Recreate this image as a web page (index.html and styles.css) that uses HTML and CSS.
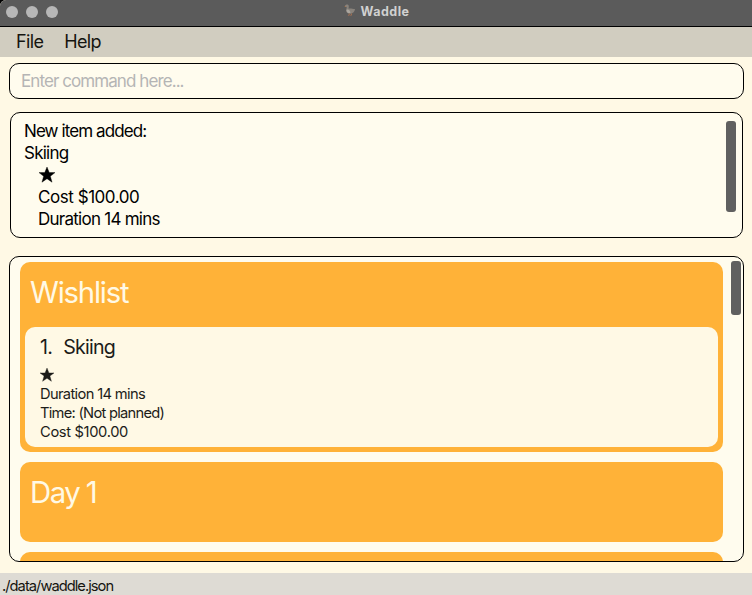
FILE: index.html
```html
<!DOCTYPE html>
<html lang="en">
<head>
<meta charset="utf-8">
<title>Waddle</title>
<link rel="stylesheet" href="styles.css">
</head>
<body>
<div class="window">
  <header class="titlebar">
    <div class="lights"><i></i><i></i><i></i></div>
    <div class="title">
      <svg class="goose" viewBox="0 0 12 12"><path d="M1 2.1C1.3.2 4.5 0 4.8 2L4.6 4.7C6.3 4 8.7 5 11 5.1 10.8 7.8 9.1 9.8 6.4 9.8 3.4 9.8 1.8 7.9 2.3 5.8L2.7 3.3Z" fill="#89837c"/><path d="M2.5 5.7C4.5 5 6.4 6.5 6.4 9 4 9.6 2.2 7.9 2.5 5.7Z" fill="#aaa69f"/><path d="M.3 2.8 1.6 1.7 2.2 2.9Z" fill="#b27d54"/><path d="M5.3 9.5V11.2H3.9M7.5 9.5V11.2H6.2" fill="none" stroke="#a67252" stroke-width=".9"/></svg>
      <span>Waddle</span>
    </div>
  </header>
  <nav class="menubar"><span>File</span><span>Help</span></nav>
  <main class="content">
    <div class="command"><span>Enter command here...</span></div>
    <section class="result">
      <div class="message">
        <p class="lead">New item added:</p>
        <p class="name">Skiing</p>
        <div class="details">
          <svg class="star" viewBox="0 0 20 20"><path d="M10 0l2.8 7h7.2l-5.8 4.6 2.1 7.4L10 14.6 3.7 19l2.1-7.4L0 7h7.2z"/></svg>
          <p class="cost">Cost $100.00</p>
          <p class="duration">Duration 14 mins</p>
        </div>
      </div>
      <div class="thumb"></div>
    </section>
    <section class="list">
      <div class="groups">
        <article class="group wishlist">
          <h2>Wishlist</h2>
          <div class="item">
            <h3><span>1.</span><span>Skiing</span></h3>
            <svg class="star" viewBox="0 0 20 20"><path d="M10 0l2.8 7h7.2l-5.8 4.6 2.1 7.4L10 14.6 3.7 19l2.1-7.4L0 7h7.2z"/></svg>
            <p>Duration 14 mins</p>
            <p class="time">Time: (Not planned)</p>
            <p class="price">Cost $100.00</p>
          </div>
        </article>
        <article class="group"><h2 class="day">Day 1</h2></article>
        <article class="group"></article>
      </div>
      <div class="thumb"></div>
    </section>
  </main>
  <footer class="status"><span>./data/waddle.json</span></footer>
</div>
</body>
</html>
```
FILE: styles.css
```css
* { box-sizing: border-box; }
body { margin: 0; background: #000; font-family: Inter, sans-serif; }
p, h2, h3 { margin: 0; font-weight: 400; }
.window { width: 752px; height: 595px; display: flex; flex-direction: column; overflow: hidden; background: #fff9e5; border-radius: 6px 0 0 0; white-space: nowrap; }
.titlebar { height: 27px; flex: none; display: grid; grid-template-columns: 1fr auto 1fr; background: #5b5b5b; border-bottom: 1px solid #000; }
.lights { display: flex; gap: 8px; padding: 6px; }
.lights i { width: 12px; height: 12px; border-radius: 50%; background: #b7b7b7; }
.title { display: flex; gap: 5px; padding-left: 1px; color: #d0d0d0; font: 700 12.5px/23px Inter, sans-serif; letter-spacing: .45px; }
.goose { width: 12px; height: 12px; margin-top: 4px; }
.menubar { height: 30px; flex: none; display: flex; gap: 21px; padding-left: 16px; background: #d1cdc0; color: #151510; font-size: 18px; line-height: 30px; letter-spacing: -.65px; }
.content { flex: 1; display: flex; flex-direction: column; padding: 6px 8px 0 9px; min-height: 0; }
.command, .result, .list { border: 1px solid #000; border-radius: 10px; background: #fffcee; flex: none; }
.command { height: 36px; padding-left: 11px; color: #b5b5b5; font-size: 17px; line-height: 34px; letter-spacing: -.92px; }
.result { height: 126px; margin: 13px 1px 18px; padding: 8px 6px 0 13px; display: flex; justify-content: space-between; color: #000; font-size: 17px; line-height: 22px; letter-spacing: -.75px; }
.message { margin-top: -1px; }
.lead { letter-spacing: -.9px; }
.cost { letter-spacing: -.45px; }
.details { padding-left: 14px; }
.star { display: block; width: 16px; height: 16px; fill: currentColor; stroke: currentColor; stroke-width: .5px; }
.details .star { margin: 3px 0 3px 1px; }
.thumb { width: 10px; background: #606060; border-radius: 3px; flex: none; }
.result .thumb { height: 91px; }
.list { height: 306px; padding: 5px 2px 0 10px; display: flex; justify-content: space-between; overflow: hidden; }
.list .thumb { height: 54px; margin-top: -1px; }
.groups { width: 703px; display: flex; flex-direction: column; gap: 10px; }
.group { height: 80px; flex: none; padding: 0 5px; background: #ffb238; border-radius: 10px; color: #fff9e5; }
.wishlist { height: 190px; }
h2 { height: 65px; padding-left: 5px; font-size: 29.3px; line-height: 62px; letter-spacing: -1.2px; font-weight: 400; }
.day { letter-spacing: -1.5px; }
.item { height: 120px; padding: 8px 15px 0; background: #fff9e5; border-radius: 10px; color: #1c1c19; font-size: 14.7px; line-height: 19px; letter-spacing: -.65px; }
.time { letter-spacing: -.73px; }
.price { letter-spacing: -.35px; }
h3 { display: flex; gap: 11px; font-size: 19.6px; line-height: 24px; letter-spacing: -.75px; }
.item .star { width: 14px; height: 14px; margin: 9px 0 3px; }
.status { height: 22px; flex: none; padding-left: 2px; background: #dedbd4; color: #151510; font-size: 14.7px; line-height: 26px; letter-spacing: -.97px; }
```
